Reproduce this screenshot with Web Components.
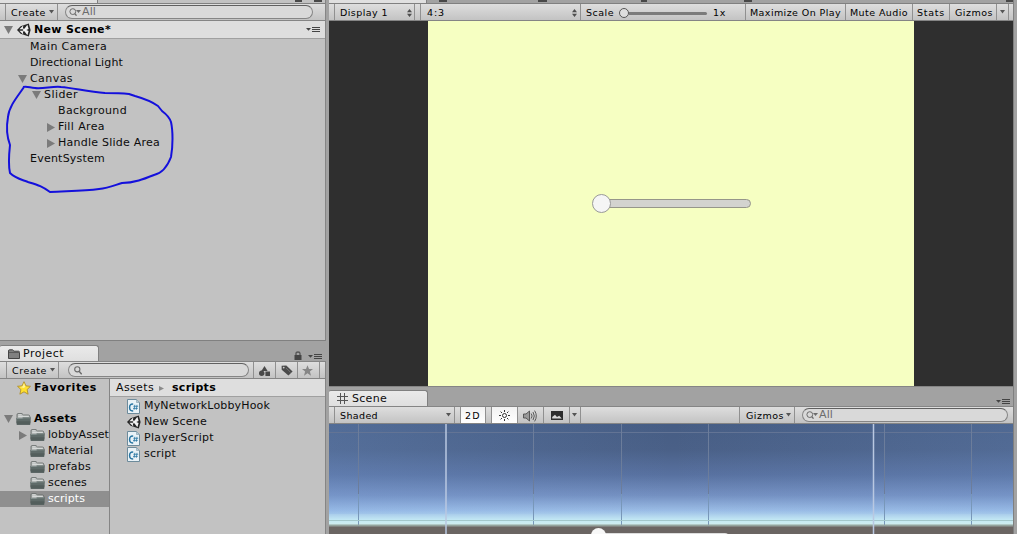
<!DOCTYPE html>
<html lang="en">
<head>
<meta charset="utf-8">
<title>Editor</title>
<style>
    body {
        margin: 0;
        overflow: hidden;
        background: #a2a2a2;
        font-family: "DejaVu Sans", Verdana, sans-serif;
        font-size: 11px;
        color: #0c0c0c;
    }
</style>
</head>
<body>
<editor-window></editor-window>

<script>
class BaseElement extends HTMLElement {
    constructor() {
        super();
        this.attachShadow({ mode: "open" });
    }

    getStyles() {
        return '';
    }

    getMarkup() {
        return '<slot></slot>';
    }

    connectedCallback() {
        const template = document.createElement('template');
        template.innerHTML = `
            <style>
                * { box-sizing: border-box; }
                ${this.getStyles()}
            </style>
            ${this.getMarkup()}
        `;
        this.shadowRoot.replaceChildren(template.content.cloneNode(true));
    }
}

/* One line of text; data-width spreads the letters over that many pixels */
class UiLabel extends BaseElement {
    getStyles() {
        return `
            :host { display: flex; flex: none; height: 16px; line-height: 16px; }
            span { flex: none; white-space: nowrap; }
        `;
    }

    getMarkup() {
        return `<span>${this.dataset.text}</span>`;
    }

    connectedCallback() {
        super.connectedCallback();
        if (!this.dataset.width) return;
        const span = this.shadowRoot.querySelector('span');
        const gap = this.dataset.width - span.getBoundingClientRect().width;
        span.style.letterSpacing = `${gap / this.dataset.text.length}px`;
    }
}

const ICONS = {
    down: [9, 8, '<path d="M0 0H9L4.5 8Z" fill="#7b7b7b"/>'],
    right: [8, 9, '<path d="M0 0V9L8 4.5Z" fill="#7b7b7b"/>'],
    crumb: [5, 5, '<path d="M0 0V5L5 2.5Z" fill="#8a8a8a"/>'],
    drop: [5, 4, '<path d="M0 0H5L2.5 3.6Z" fill="#555"/>'],
    updown: [5, 8, '<path d="M0 3.2H5L2.5 0ZM0 4.8H5L2.5 8Z" fill="#4e4e4e"/>'],
    menu: [14, 7, '<path d="M0 2H5L2.5 4.7Z" fill="#444"/><path d="M6 1.5H14M6 3.5H14M6 5.5H14" stroke="#444"/>'],
    lock: [8, 9, '<path d="M2 4V2.5Q2 1 4 1T6 2.5V4" fill="none" stroke="#555" stroke-width="1.3"/><path d="M.5 4H7.5V9H.5Z" fill="#454545"/>'],
    unity: [14, 14, '<path d="M0 7 3.6 3.3 11.8 .5 13.6 7 11.8 13.5 3.6 10.7Z" fill="#262626"/><path d="M2.4 6.2 6.3 2.6 5.8 5.6 7.4 5.8 10.4 1.8 11.6 6 9.3 7 11.6 8 10.4 12.2 7.4 8.2 5.8 8.4 6.3 11.4 2.4 7.8H5.7L6.5 7 5.7 6.2Z" fill="#f2f2f2"/>'],
    star: [14, 14, '<path d="M7 .7 9 4.9 13.5 5.3 10.1 8.5 11.1 13.2 7 10.8 2.9 13.2 3.9 8.5.5 5.3 5 4.9Z" fill="#ffe02e" stroke="#b08e2c" stroke-width=".9"/><path d="M7 2 8.2 5.7 7 7 3 6 5.7 5.5Z" fill="#fff39a"/>'],
    fav: [11, 11, '<path d="M5.5 .2 7 4H11L7.9 6.5 9 10.8 5.5 8.3 2 10.8 3.1 6.5 0 4H4Z" fill="#868686"/>'],
    folder: [15, 12, '<path d="M1 10V1.8Q1 .6 2 .6H6L7.5 2H12.4Q13.8 2 13.8 3.5V10Z" fill="#b0b4b3" stroke="#5f6463" stroke-width=".8"/><path d="M2.2 1.8H5.6M2.2 3.3H12.8" stroke="#eceeed" stroke-width=".8"/><path d="M.3 4.9H6L7.5 4.2H14.8L14.2 11.7H.8Z" fill="#5f6b69"/><path d="M.6 8.2H14.3L14.1 11.7H.8Z" fill="#535e5c"/><path d="M.8 5.5H6.3L7.8 4.8H14.2" fill="none" stroke="#8c9795" stroke-width=".8"/>'],
    tabfolder: [12, 10, '<path d="M.5 9.5V2Q.5.8 1.5.8H4.5L6 2.2H10.5Q11.5 2.2 11.5 3.5V9.5Z" fill="#808080" stroke="#444"/><path d="M1 3.5H11" stroke="#5a5a5a"/>'],
    script: [13, 15, '<path d="M.5.5H9.5L12.5 3.5V14.5H.5Z" fill="#e9f2f7" stroke="#6d8b9b"/><path d="M9.5.5V3.5H12.5" fill="#b7cbd6" stroke="#8199a6" stroke-width=".6"/><path d="M6.2 5.2Q2.6 4.6 2.6 8.5T6.2 11.8" fill="none" stroke="#2b77a3" stroke-width="1.5"/><path d="M7.8 5.8 7.1 10.8M10 5.8 9.3 10.8M6.4 7.3H11.2M6 9.4H10.8" stroke="#2b77a3" stroke-width=".8"/>'],
    search: [8, 9, '<circle cx="3.3" cy="3.3" r="2.6" fill="none" stroke="#6b6b6b" stroke-width="1.1"/><path d="M5.1 5.2 7.7 8.3" stroke="#6b6b6b" stroke-width="1.4"/>'],
    searchdrop: [12, 8, '<circle cx="3.8" cy="3.6" r="2.9" fill="none" stroke="#6b6b6b"/><path d="M5.8 5.6 7.5 7.7" stroke="#6b6b6b" stroke-width="1.3"/><path d="M7 2H12L9.5 5Z" fill="#6b6b6b"/>'],
    types: [11, 10, '<path d="M5.5 0 8.6 5H2.4Z" fill="#4a4a4a"/><circle cx="2.7" cy="7.2" r="2.7" fill="#4a4a4a"/><path d="M6.4 5.5H11V10H6.4Z" fill="#4a4a4a"/>'],
    tag: [12, 11, '<path d="M.6.8 5.3.4 11.6 6.4 7.4 10.6.7 4.7Z" fill="#4a4a4a"/><circle cx="2.7" cy="2.6" r=".9" fill="#ccc"/><path d="M5 3 9.4 7.2" stroke="#888" stroke-width=".6"/>'],
    grid: [11, 11, '<path d="M3.5 0V11M7.5 0V11M0 3.5H11M0 7.5H11" stroke="#555" stroke-width="1"/>'],
    sun: [11, 11, '<circle cx="5.5" cy="5.5" r="2" fill="none" stroke="#333"/><path d="M5.5 0V2M5.5 9V11M0 5.5H2M9 5.5H11M1.6 1.6 3 3M8 8 9.4 9.4M9.4 1.6 8 3M3 8 1.6 9.4" stroke="#333" stroke-width="1"/>'],
    audio: [14, 12, '<path d="M.5 4H3L6.5 1V11L3 8H.5Z" fill="#999" stroke="#4e4e4e" stroke-width=".9"/><path d="M8.2 3.5Q10 6 8.2 8.5M10 2Q12.6 6 10 10M11.6.6Q15 6 11.6 11.4" fill="none" stroke="#4e4e4e" stroke-width=".9"/>'],
    image: [12, 9, '<path d="M0 0H12V9H0Z" fill="#2e2e2e"/><path d="M1.2 7.6V6L4 3.7 6 6 8.2 4.8 10.8 7.6Z" fill="#d8d8d8"/>']
};

class UiIcon extends BaseElement {
    getStyles() {
        return `
            :host { display: block; flex: none; }
            svg { display: block; }
        `;
    }

    getMarkup() {
        const [w, h, body] = ICONS[this.dataset.name];
        return `<svg width="${w}" height="${h}" viewBox="0 0 ${w} ${h}">${body}</svg>`;
    }
}

class ToolBar extends BaseElement {
    getStyles() {
        return `
            :host {
                display: flex;
                flex: none;
                height: 17px;
                background: linear-gradient(#dedede, #c3c3c3);
                border-bottom: 1px solid #858585;
                font-size: 9.5px;
                color: #000;
            }
        `;
    }
}

/* Segment of a toolbar, with its divider on the right */
class ToolItem extends BaseElement {
    getStyles() {
        return `
            :host {
                display: flex;
                flex: none;
                align-items: center;
                justify-content: space-between;
                box-sizing: border-box;
                width: ${this.dataset.width}px;
                padding: 1px ${this.dataset.right || 0}px 0 ${this.dataset.left || 0}px;
                border-right: 1px solid ${this.dataset.plain === undefined ? '#909090' : 'transparent'};
                ${this.dataset.on === undefined ? '' : 'background: linear-gradient(#f2f2f2, #fff);'}
            }
            ::slotted([data-name="drop"]) { margin-top: -2px; }
        `;
    }
}

class SearchField extends BaseElement {
    getStyles() {
        return `
            :host {
                display: flex;
                flex: none;
                align-items: center;
                align-self: center;
                box-sizing: border-box;
                width: ${this.dataset.width}px;
                height: 14px;
                padding-left: 3px;
                border: 1px solid #858585;
                border-top-color: #606060;
                border-radius: 7px;
                background: #d9d9d9;
                font-size: 11px;
                color: #6c6c6c;
            }
            ui-label { margin: -1px 0 0 1px; }
        `;
    }

    getMarkup() {
        return this.dataset.text
            ? `<ui-icon data-name="searchdrop"></ui-icon><ui-label data-text="${this.dataset.text}" data-width="14"></ui-label>`
            : '<ui-icon data-name="search" style="margin-left:2px"></ui-icon>';
    }
}

/* Row of a tree or a list: optional fold arrow, optional icon, name */
class TreeRow extends BaseElement {
    getStyles() {
        return `
            :host {
                display: flex;
                align-items: center;
                height: 16px;
                overflow: hidden;
            }
            :host([selected]) { background: #8f8f8f; color: #fff; }
            :host([bold]) { font-weight: bold; color: #000; }
            .fold {
                display: flex;
                flex: none;
                justify-content: flex-end;
                width: ${this.dataset.indent}px;
                padding-right: 3px;
            }
            .icon { display: flex; flex: none; width: 18px; }
            .icon [data-name="script"] { margin-left: 1px; }
            .icon [data-name="unity"], .icon [data-name="star"] { margin-left: 1px; }
        `;
    }

    getMarkup() {
        const { fold, icon, text, width } = this.dataset;
        return `
            <div class="fold">${fold ? `<ui-icon data-name="${fold}"></ui-icon>` : ''}</div>
            ${icon ? `<div class="icon"><ui-icon data-name="${icon}"></ui-icon></div>` : ''}
            <ui-label data-text="${text}" data-width="${width}"></ui-label>
        `;
    }
}

class PanelTabs extends BaseElement {
    getStyles() {
        return `
            :host { display: flex; flex: none; justify-content: space-between; align-items: flex-end; }
            .tab {
                display: flex;
                align-items: center;
                gap: ${this.dataset.gap || 3}px;
                width: 99px;
                height: 100%;
                padding-left: 8px;
                background: linear-gradient(#eaeaea, #dfdfdf);
                border: 1px solid #808080;
                border-width: 1px 1px 0 0;
                border-radius: 2px 3px 0 0;
            }
            .tools { display: flex; align-items: flex-end; gap: 6px; padding: 0 3px 1px 0; }
        `;
    }

    getMarkup() {
        return `
            <div class="tab">
                <ui-icon data-name="${this.dataset.icon}"></ui-icon>
                <ui-label data-text="${this.dataset.text}" data-width="${this.dataset.width}"></ui-label>
            </div>
            <div class="tools"><slot></slot></div>
        `;
    }
}

/* Lower edge of a tab strip that runs out of the window; marks are gap:width pairs */
class CutTabs extends BaseElement {
    getStyles() {
        return `
            :host { display: flex; flex: none; box-sizing: border-box; height: 4px; border-bottom: 1px solid #808080; overflow: hidden; }
            .tab { flex: none; width: 98px; background: #e0e0e0; border-right: 1px solid #808080; }
            i { flex: none; height: 2px; background: #484848; }
        `;
    }

    getMarkup() {
        const marks = this.dataset.marks.split(' ').map(mark => {
            const [gap, width] = mark.split(':');
            return `<i style="margin-left:${gap}px;width:${width}px"></i>`;
        });
        return `<div class="tab"></div>${marks.join('')}`;
    }
}

class HierarchyPanel extends BaseElement {
    getStyles() {
        return `
            :host {
                display: flex;
                flex-direction: column;
                box-sizing: border-box;
                position: relative;
                height: 341px;
                background: #c2c2c2;
                border-right: 1px solid #858585;
                border-bottom: 1px solid #808080;
            }
            .scene {
                display: flex;
                align-items: center;
                height: 18px;
                padding-right: 5px;
                background: #dedede;
                border-bottom: 1px solid #a0a0a0;
            }
            .scene tree-row { flex: 1; }
            .marker { position: absolute; left: 0; top: 80px; }
        `;
    }

    getMarkup() {
        return `
            <cut-tabs data-marks="197:7 12:8"></cut-tabs>
            <tool-bar>
                <tool-item data-width="6"></tool-item>
                <tool-item data-width="52" data-left="5" data-right="3">
                    <ui-label data-text="Create" data-width="35"></ui-label><ui-icon data-name="drop"></ui-icon>
                </tool-item>
                <search-field data-width="248" data-text="All" style="margin-left:7px"></search-field>
            </tool-bar>
            <div class="scene">
                <tree-row bold data-indent="16" data-fold="down" data-icon="unity" data-text="New Scene*" data-width="77"></tree-row>
                <ui-icon data-name="menu"></ui-icon>
            </div>
            <tree-row data-indent="30" data-text="Main Camera" data-width="77"></tree-row>
            <tree-row data-indent="30" data-text="Directional Light" data-width="93"></tree-row>
            <tree-row data-indent="30" data-fold="down" data-text="Canvas" data-width="43"></tree-row>
            <tree-row data-indent="44" data-fold="down" data-text="Slider" data-width="34"></tree-row>
            <tree-row data-indent="58" data-text="Background" data-width="69"></tree-row>
            <tree-row data-indent="58" data-fold="right" data-text="Fill Area" data-width="47"></tree-row>
            <tree-row data-indent="58" data-fold="right" data-text="Handle Slide Area" data-width="102"></tree-row>
            <tree-row data-indent="30" data-text="EventSystem" data-width="75"></tree-row>
            <svg class="marker" width="200" height="120">
                <path d="M24 7C18 16 9 26 8 37C6 48 7 57 10 65C9 74 8 84 10 93C15 98 20 99 28 102C38 105 42 106 50 112C67 111 84 111 99 109C109 108 115 105 122 103C134 103 144 99 154 95C163 93 168 85 171 77C173 66 173 51 171 42C169 36 166 34 162 31L158 26C151 21 142 18 135 16L129 14C120 13 112 13 105 13C88 12 74 8 61 7C53 6 43 9 35 8C30 8 28 6 23 7"
                    fill="none" stroke="#1410dc" stroke-width="2" stroke-linejoin="round"/>
            </svg>
        `;
    }
}

class ProjectPanel extends BaseElement {
    getStyles() {
        return `
            :host { display: flex; flex-direction: column; flex: 1; min-height: 0; margin-top: 4px; }
            panel-tabs { height: 16px; width: 325px; }
            tool-bar { box-sizing: border-box; height: 18px; border-top: 1px solid #858585; border-right: 1px solid #858585; }
            .body { display: flex; flex: 1; min-height: 0; background: #c2c2c2; border-right: 1px solid #858585; }
            .tree { width: 110px; border-right: 1px solid #858585; padding-top: 1px; overflow: hidden; }
            .tree [data-text="Favorites"] { margin-bottom: 15px; }
            .files { flex: 1; }
            .path {
                display: flex;
                align-items: center;
                height: 18px;
                padding: 1px 0 0 6px;
                background: #dedede;
                border-bottom: 1px solid #a0a0a0;
                margin-bottom: 1px;
            }
            .path ui-icon { margin: 0 8px 0 5px; }
            .path b { color: #000; }
        `;
    }

    getMarkup() {
        return `
            <panel-tabs data-icon="tabfolder" data-text="Project" data-width="41">
                <ui-icon data-name="lock"></ui-icon><ui-icon data-name="menu"></ui-icon>
            </panel-tabs>
            <tool-bar>
                <tool-item data-width="7"></tool-item>
                <tool-item data-width="52" data-left="5" data-right="3">
                    <ui-label data-text="Create" data-width="35"></ui-label><ui-icon data-name="drop"></ui-icon>
                </tool-item>
                <search-field data-width="181" style="margin-left:9px"></search-field>
                <tool-item data-width="5"></tool-item>
                <tool-item data-width="22" data-left="5"><ui-icon data-name="types"></ui-icon></tool-item>
                <tool-item data-width="22" data-left="5"><ui-icon data-name="tag"></ui-icon></tool-item>
                <tool-item data-width="22" data-left="4"><ui-icon data-name="fav"></ui-icon></tool-item>
            </tool-bar>
            <div class="body">
                <div class="tree">
                    <tree-row bold data-indent="16" data-icon="star" data-text="Favorites" data-width="63"></tree-row>
                    <tree-row bold data-indent="16" data-fold="down" data-icon="folder" data-text="Assets" data-width="43"></tree-row>
                    <tree-row data-indent="30" data-fold="right" data-icon="folder" data-text="lobbyAsset" data-width="61"></tree-row>
                    <tree-row data-indent="30" data-icon="folder" data-text="Material" data-width="45"></tree-row>
                    <tree-row data-indent="30" data-icon="folder" data-text="prefabs" data-width="43"></tree-row>
                    <tree-row data-indent="30" data-icon="folder" data-text="scenes" data-width="39"></tree-row>
                    <tree-row selected data-indent="30" data-icon="folder" data-text="scripts" data-width="37"></tree-row>
                </div>
                <div class="files">
                    <div class="path">
                        <ui-label data-text="Assets" data-width="38"></ui-label>
                        <ui-icon data-name="crumb"></ui-icon>
                        <b><ui-label data-text="scripts" data-width="44"></ui-label></b>
                    </div>
                    <tree-row data-indent="16" data-icon="script" data-text="MyNetworkLobbyHook" data-width="126"></tree-row>
                    <tree-row data-indent="16" data-icon="unity" data-text="New Scene" data-width="63"></tree-row>
                    <tree-row data-indent="16" data-icon="script" data-text="PlayerScript" data-width="70"></tree-row>
                    <tree-row data-indent="16" data-icon="script" data-text="script" data-width="32"></tree-row>
                </div>
            </div>
        `;
    }
}

class GameSlider extends BaseElement {
    getStyles() {
        return `
            :host { display: flex; align-items: center; width: 159px; height: 20px; }
            .knob { flex: none; width: 19px; height: 19px; border-radius: 50%; background: #f5f5f5; border: 1.5px solid #999; z-index: 1; }
            .track { flex: 1; height: 9px; margin-left: -6px; background: #d3d3cf; border: 1px solid #96968a; border-radius: 4.5px; }
        `;
    }

    getMarkup() {
        return '<div class="knob"></div><div class="track"></div>';
    }
}

class GamePanel extends BaseElement {
    getStyles() {
        return `
            :host { display: flex; flex-direction: column; box-sizing: border-box; height: 387px; border-bottom: 1px solid #858585; }
            .view { flex: 1; display: flex; padding: 0 99px; background: #2f2f2f; }
            .screen { flex: 1; display: flex; align-items: center; justify-content: center; background: #f6ffc2; }
            .scale { display: flex; align-items: center; width: 88px; margin: 2px 6px 0 5px; }
            .scale i { flex: none; width: 10px; height: 10px; border: 1px solid #555; border-radius: 50%; background: #ddd; }
            .scale u { flex: 1; height: 3px; border-radius: 0 2px 2px 0; background: #7b7b7b; }
            .low { margin-top: 1px; }
        `;
    }

    getMarkup() {
        return `
            <cut-tabs data-marks="12:8 91:9 94:6 97:8 254:8"></cut-tabs>
            <tool-bar>
                <tool-item data-width="6"></tool-item>
                <tool-item data-width="80" data-left="5" data-right="2">
                    <ui-label data-text="Display 1" data-width="48"></ui-label><ui-icon data-name="updown"></ui-icon>
                </tool-item>
                <tool-item data-width="6"></tool-item>
                <tool-item data-width="160" data-left="6" data-right="3">
                    <ui-label data-text="4:3" data-width="18"></ui-label><ui-icon data-name="updown"></ui-icon>
                </tool-item>
                <tool-item class="low" data-plain data-width="33" data-left="5"><ui-label data-text="Scale" data-width="28"></ui-label></tool-item>
                <div class="scale"><i></i><u></u></div>
                <tool-item data-width="33"><ui-label class="low" data-text="1x" data-width="13"></ui-label></tool-item>
                <tool-item data-width="100" data-left="4"><ui-label data-text="Maximize On Play" data-width="91"></ui-label></tool-item>
                <tool-item data-width="67" data-left="4"><ui-label data-text="Mute Audio" data-width="58"></ui-label></tool-item>
                <tool-item data-width="37" data-left="4"><ui-label data-text="Stats" data-width="28"></ui-label></tool-item>
                <tool-item data-width="47" data-left="5"><ui-label data-text="Gizmos" data-width="38"></ui-label></tool-item>
                <tool-item data-width="12" data-left="3"><ui-icon data-name="drop"></ui-icon></tool-item>
            </tool-bar>
            <div class="view"><div class="screen"><game-slider></game-slider></div></div>
        `;
    }
}

/* Sky, horizon and world grid of the scene camera */
class SceneView extends BaseElement {
    getStyles() {
        return `
            :host { display: block; flex: 1; min-height: 0; overflow: hidden; }
            svg { display: block; }
        `;
    }

    getMarkup() {
        const minor = [30, 205, 293, 380, 556, 643]
            .map(x => `<path d="M${x - .5} 0V70" stroke="#6c7d9b"/><path d="M${x - .5} 70V103" stroke="#7897b9"/>`).join('');
        return `
            <svg width="685" height="112">
                <defs>
                    <linearGradient id="sky" x2="0" y2="1">
                        <stop offset="0" stop-color="#465d84"/>
                        <stop offset=".25" stop-color="#4a6087"/>
                        <stop offset=".5" stop-color="#5871a0"/>
                        <stop offset=".7" stop-color="#7490c1"/>
                        <stop offset=".85" stop-color="#9bbde6"/>
                        <stop offset=".94" stop-color="#c3e8f4"/>
                        <stop offset="1" stop-color="#d4eeed"/>
                    </linearGradient>
                    <linearGradient id="side">
                        <stop offset="0" stop-color="#80a9e5" stop-opacity=".2"/>
                        <stop offset=".5" stop-color="#80a9e5" stop-opacity="0"/>
                        <stop offset="1" stop-color="#80a9e5" stop-opacity=".15"/>
                    </linearGradient>
                </defs>
                <rect width="685" height="102" fill="url(#sky)"/>
                <rect width="685" height="90" fill="url(#side)"/>
                <path d="M0 8.5H684" stroke="#637495"/>
                ${minor}
                <path d="M0 96.5H684" stroke="#a3c7cb"/>
                <path d="M0 101.5H684" stroke="#93a39d" stroke-width="2"/>
                <rect y="102.5" width="685" height="10" fill="#6b6563"/>
                <path d="M117 0V112M544.5 0V112" stroke="#b9c8e1" stroke-width="1.5"/>
                <path d="M270 109H396Q399 109 400 112H270Z" fill="#ddd"/>
                <circle cx="269.5" cy="111.5" r="7.5" fill="#f8f8f8"/>
            </svg>
        `;
    }
}

class ScenePanel extends BaseElement {
    getStyles() {
        return `
            :host { display: flex; flex-direction: column; flex: 1; min-height: 0; margin-top: 3px; }
            panel-tabs { height: 16px; }
            tool-bar { box-sizing: border-box; height: 18px; border-top: 1px solid #858585; }
            .space { flex: 1; border-right: 1px solid #909090; }
        `;
    }

    getMarkup() {
        return `
            <panel-tabs data-icon="grid" data-text="Scene" data-width="35" data-gap="4"><ui-icon data-name="menu"></ui-icon></panel-tabs>
            <tool-bar>
                <tool-item data-width="6"></tool-item>
                <tool-item data-width="120" data-left="5" data-right="3">
                    <ui-label data-text="Shaded" data-width="38"></ui-label><ui-icon data-name="drop"></ui-icon>
                </tool-item>
                <tool-item data-width="6"></tool-item>
                <tool-item data-on data-width="25" data-left="4"><ui-label data-text="2D" data-width="16"></ui-label></tool-item>
                <tool-item data-width="6"></tool-item>
                <tool-item data-on data-width="26" data-left="7"><ui-icon data-name="sun"></ui-icon></tool-item>
                <tool-item data-width="26" data-left="5"><ui-icon data-name="audio"></ui-icon></tool-item>
                <tool-item data-width="26" data-left="7"><ui-icon data-name="image"></ui-icon></tool-item>
                <tool-item data-width="11" data-left="2"><ui-icon data-name="drop"></ui-icon></tool-item>
                <div class="space"></div>
                <tool-item data-width="55" data-left="6" data-right="3">
                    <ui-label data-text="Gizmos" data-width="38"></ui-label><ui-icon data-name="drop"></ui-icon>
                </tool-item>
                <search-field data-width="206" data-text="All" style="margin:0 5px 0 7px"></search-field>
            </tool-bar>
            <scene-view></scene-view>
        `;
    }
}

class EditorWindow extends BaseElement {
    getStyles() {
        return `
            :host { display: flex; gap: 3px; width: 1017px; height: 534px; background: #a2a2a2; }
            .column { display: flex; flex-direction: column; }
            .left { width: 326px; }
            .right { width: 685px; border-right: 1px solid #808080; }
        `;
    }

    getMarkup() {
        return `
            <div class="column left"><hierarchy-panel></hierarchy-panel><project-panel></project-panel></div>
            <div class="column right"><game-panel></game-panel><scene-panel></scene-panel></div>
        `;
    }
}

customElements.define("ui-label", UiLabel);
customElements.define("ui-icon", UiIcon);
customElements.define("tool-bar", ToolBar);
customElements.define("tool-item", ToolItem);
customElements.define("search-field", SearchField);
customElements.define("tree-row", TreeRow);
customElements.define("panel-tabs", PanelTabs);
customElements.define("cut-tabs", CutTabs);
customElements.define("hierarchy-panel", HierarchyPanel);
customElements.define("project-panel", ProjectPanel);
customElements.define("game-slider", GameSlider);
customElements.define("game-panel", GamePanel);
customElements.define("scene-view", SceneView);
customElements.define("scene-panel", ScenePanel);
customElements.define("editor-window", EditorWindow);
</script>
</body>
</html>
